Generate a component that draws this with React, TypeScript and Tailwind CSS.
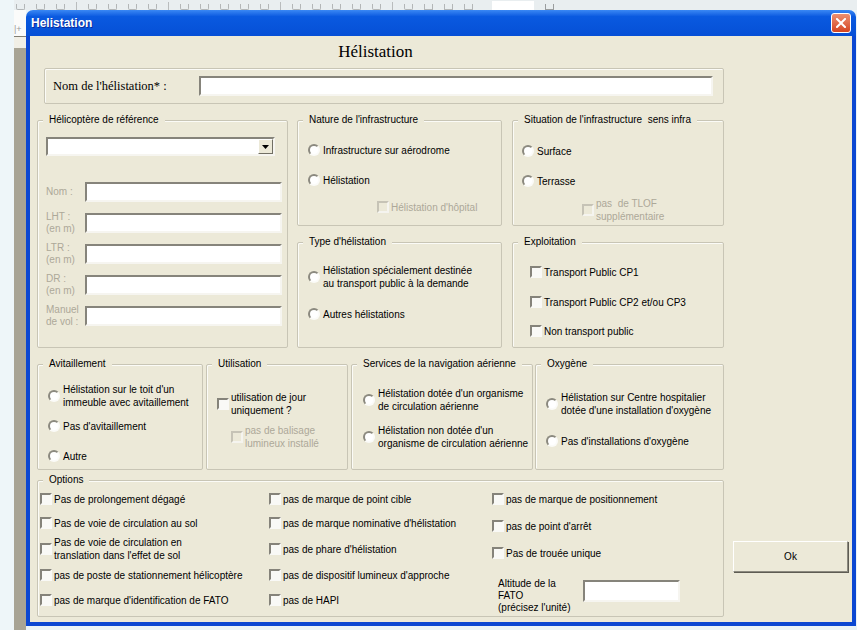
import type { ReactNode } from "react";

const toolbarIcons = [9, 9, 9, 0, 9, 9, 9, 9, 0, 9, 9, 9, 9, 9, 0, 9, 9, 9, 9, 9, 0, 9];

function Toolbar() {
  return (
    <div className="flex h-[10px] shrink-0 items-end gap-[11px] overflow-hidden bg-[#e9eef0] pl-[2px]">
      {toolbarIcons.map((w, i) =>
        w === 0 ? (
          <span key={i} className="h-[8px] w-px bg-[#b9bcbd]" />
        ) : (
          <span key={i} className="h-[6px] w-[9px] rounded-b-[2px] border border-t-0 border-[#b3b6b7]" />
        ),
      )}
      <span className="h-[6px] w-[9px] border border-t-0 border-[#b3b6b7]" />
      <span className="h-[6px] w-[9px] border border-t-0 border-[#b3b6b7]" />
      <span className="h-[6px] w-[9px] border border-t-0 border-[#b3b6b7]" />
      <span className="ml-[8px] h-[9px] w-[42px] bg-white" />
      <span className="h-[6px] w-[9px] border border-t-0 border-[#9a9d9e]" />
    </div>
  );
}

function Frame({
  title,
  className = "",
  children,
}: {
  title?: string;
  className?: string;
  children?: ReactNode;
}) {
  return (
    <div
      className={`relative shrink-0 rounded-[2px] border border-[#c8c5b5] shadow-[inset_1px_1px_0_#fbfbf7] ${className}`}
    >
      {title && (
        <span className="absolute -top-[7px] left-[5px] whitespace-pre bg-[#ece9d8] px-[6px] leading-[12px]">
          {title}
        </span>
      )}
      {children}
    </div>
  );
}

function Radio() {
  return (
    <span className="block size-[12px] shrink-0 rounded-full border-2 border-t-[#8b897f] border-l-[#8b897f] border-r-[#fbfbf8] border-b-[#fbfbf8] bg-white" />
  );
}

function Check({ disabled = false }: { disabled?: boolean }) {
  return disabled ? (
    <span className="block size-[12px] shrink-0 border-2 border-t-[#c6c3b6] border-l-[#c6c3b6] border-r-[#f5f4ef] border-b-[#f5f4ef] bg-[#ece9d8]" />
  ) : (
    <span className="block size-[12px] shrink-0 border-2 border-t-[#85837a] border-l-[#85837a] border-r-[#f9f9f6] border-b-[#f9f9f6] bg-[#f9f9f6]" />
  );
}

function Choice({
  type,
  disabled = false,
  className = "",
  children,
}: {
  type: "radio" | "check";
  disabled?: boolean;
  className?: string;
  children: ReactNode;
}) {
  return (
    <div
      className={`flex items-center ${type === "radio" ? "gap-[3px]" : "gap-[2px]"} ${className}`}
    >
      {type === "radio" ? <Radio /> : <Check disabled={disabled} />}
      <span className={disabled ? "text-[#aca899]" : undefined}>{children}</span>
    </div>
  );
}

function TextBox({ className = "" }: { className?: string }) {
  return (
    <div
      className={`shrink-0 border-2 border-t-[#86847b] border-l-[#86847b] border-r-[#f6f5f0] border-b-[#f6f5f0] bg-white ${className}`}
    />
  );
}

function ComboBox() {
  return (
    <div className="flex h-[19px] w-[229px] items-center justify-end border-2 border-t-[#86847b] border-l-[#86847b] border-r-[#f6f5f0] border-b-[#f6f5f0] bg-white">
      <div className="flex h-[15px] w-[15px] items-center justify-center border border-t-white border-l-white border-r-[#716f64] border-b-[#716f64] bg-[#ece9d8]">
        <svg width="7" height="4" viewBox="0 0 7 4" aria-hidden="true">
          <path d="M0 0h7L3.5 4z" fill="#000" />
        </svg>
      </div>
    </div>
  );
}

const helicoFields = [
  ["Nom :"],
  ["LHT :", "(en m)"],
  ["LTR :", "(en m)"],
  ["DR :", "(en m)"],
  ["Manuel", "de vol :"],
];

const optionsCol1 = [
  { h: "h-[24px]", label: "Pas de prolongement dégagé" },
  { h: "h-[24px]", label: "Pas de voie de circulation au sol" },
  { h: "h-[28px]", label: "Pas de voie de circulation en\ntranslation dans l'effet de sol" },
  { h: "h-[24px]", label: "pas de poste de stationnement hélicoptère" },
  { h: "h-[26px]", label: "pas de marque d'identification de FATO" },
];

const optionsCol2 = [
  { h: "h-[24px]", label: "pas de marque de point cible" },
  { h: "h-[24px]", label: "pas de marque nominative d'hélistation" },
  { h: "h-[28px]", label: "pas de phare d'hélistation" },
  { h: "h-[24px]", label: "pas de dispositif lumineux d'approche" },
  { h: "h-[26px]", label: "pas de HAPI" },
];

const optionsCol3 = [
  { h: "h-[24px]", label: "pas de marque de positionnement" },
  { h: "h-[30px]", label: "pas de point d'arrêt" },
  { h: "h-[24px]", label: "Pas de trouée unique" },
];

export default function App() {
  return (
    <div className="relative h-[630px] w-[857px] overflow-hidden bg-[#eaf3f7] font-['Liberation_Sans',Arial,sans-serif] text-[10px] leading-[13px] text-black">
      {/* spreadsheet window behind the form */}
      <div className="flex h-full">
        <div className="w-[14px] shrink-0 bg-[#eef6f9]" />
        <div className="flex flex-1 flex-col">
          <Toolbar />
          <div className="flex flex-1">
            <div className="flex w-[12px] shrink-0 flex-col">
              <div className="flex h-[26px] items-end bg-[#fbfbfa] pb-[2px] text-[9px] leading-[10px] text-[#9a9a9a]">
                |+
              </div>
              <div className="h-[12px] border-t border-[#807e73] bg-[#f1efe6]" />
              <div className="flex-1 bg-[#a8a495]" />
            </div>
            <div className="flex-1" />
          </div>
        </div>
      </div>

      {/* UserForm window */}
      <div className="absolute left-[26px] top-[10px] flex h-[616px] w-[830px] flex-col">
        <div className="flex h-[26px] shrink-0 items-center justify-between rounded-t-[7px] bg-linear-to-b from-[#3a88f4] via-[#0a5ae0] via-25% to-[#064fd6] pl-[5px] pr-[5px]">
          <span className="text-[12px] font-bold leading-[14px] text-white [text-shadow:1px_1px_0_#0b2a9a]">
            Helistation
          </span>
          <div className="flex size-[20px] items-center justify-center rounded-[3px] border border-white bg-linear-to-b from-[#ec8f70] to-[#d4431e]">
            <svg width="10" height="10" viewBox="0 0 10 10" aria-hidden="true">
              <path d="M1 1l8 8M9 1L1 9" stroke="#fff" strokeWidth="2" strokeLinecap="square" />
            </svg>
          </div>
        </div>

        <div className="flex flex-1 border-x-4 border-b-4 border-[#0b47d2] bg-[#ece9d8] pl-[7px] pt-[6px]">
          {/* main column */}
          <div className="flex w-[687px] shrink-0 flex-col">
            <div className="h-[20px] pr-[10px] text-center font-['Liberation_Serif','Times_New_Roman',serif] text-[17px] leading-[20px]">
              Hélistation
            </div>

            <Frame className="ml-[7px] mt-[6px] flex h-[36px] w-[680px] items-center pl-[8px]">
              <span className="w-[146px] shrink-0 font-['Liberation_Serif','Times_New_Roman',serif] text-[12.5px]">
                {"Nom de l'hélistation* :"}
              </span>
              <TextBox className="h-[20px] w-[514px]" />
            </Frame>

            {/* helicopter / infrastructure */}
            <div className="mt-[16px] flex h-[228px]">
              <Frame title="Hélicoptère de référence" className="h-[228px] w-[251px] pl-[8px] pt-[16px]">
                <ComboBox />
                <div className="mt-[26px] flex flex-col gap-[11px]">
                  {helicoFields.map((lines) => (
                    <div key={lines[0]} className="flex h-[20px] items-center">
                      <div className="w-[39px] shrink-0 leading-[12px] text-[#aca899]">
                        {lines.map((l) => (
                          <div key={l}>{l}</div>
                        ))}
                      </div>
                      <TextBox className="h-[20px] w-[197px]" />
                    </div>
                  ))}
                </div>
              </Frame>

              <div className="ml-[9px] flex w-[205px] shrink-0 flex-col">
                <Frame title="Nature de l'infrastructure" className="h-[106px] pl-[10px] pt-[21px]">
                  <Choice type="radio" className="h-[16px]">Infrastructure sur aérodrome</Choice>
                  <Choice type="radio" className="mt-[14px] h-[16px]">Hélistation</Choice>
                  <Choice type="check" disabled className="ml-[69px] mt-[11px] h-[16px]">
                    {"Hélistation d'hôpital"}
                  </Choice>
                </Frame>
                <Frame title="Type d'hélistation" className="mt-[16px] h-[106px] pl-[10px] pt-[21px]">
                  <Choice type="radio">
                    Hélistation spécialement destinée
                    <br />
                    au transport public à la demande
                  </Choice>
                  <Choice type="radio" className="mt-[16px] h-[16px]">Autres hélistations</Choice>
                </Frame>
              </div>

              <div className="ml-[10px] flex w-[212px] shrink-0 flex-col">
                <Frame
                  title="Situation de l'infrastructure  sens infra"
                  className="h-[106px] pl-[9px] pt-[22px]"
                >
                  <Choice type="radio" className="h-[16px]">Surface</Choice>
                  <Choice type="radio" className="mt-[14px] h-[16px]">Terrasse</Choice>
                  <Choice type="check" disabled className="ml-[60px] mt-[8px]">
                    <span className="whitespace-pre">{"pas  de TLOF\nsupplémentaire"}</span>
                  </Choice>
                </Frame>
                <Frame title="Exploitation" className="mt-[16px] h-[106px] pl-[17px] pt-[21px]">
                  <Choice type="check" className="h-[16px]">Transport Public CP1</Choice>
                  <Choice type="check" className="mt-[14px] h-[16px]">Transport Public CP2 et/ou CP3</Choice>
                  <Choice type="check" className="mt-[13px] h-[16px]">Non transport public</Choice>
                </Frame>
              </div>
            </div>

            {/* fuel, usage, air navigation, oxygen */}
            <div className="mt-[16px] flex h-[106px]">
              <Frame title="Avitaillement" className="h-[106px] w-[166px] pl-[10px] pt-[18px]">
                <Choice type="radio">
                  {"Hélistation sur le toit d'un"}
                  <br />
                  immeuble avec avitaillement
                </Choice>
                <Choice type="radio" className="mt-[9px] h-[16px]">{"Pas d'avitaillement"}</Choice>
                <Choice type="radio" className="mt-[14px] h-[16px]">Autre</Choice>
              </Frame>
              <Frame title="Utilisation" className="ml-[3px] h-[106px] w-[142px] pl-[10px] pt-[26px]">
                <Choice type="check">
                  utilisation de jour
                  <br />
                  uniquement ?
                </Choice>
                <Choice type="check" disabled className="ml-[14px] mt-[7px]">
                  pas de balisage
                  <br />
                  lumineux installé
                </Choice>
              </Frame>
              <Frame
                title="Services de la navigation aérienne"
                className="ml-[3px] h-[106px] w-[182px] pl-[11px] pt-[22px]"
              >
                <Choice type="radio">
                  {"Hélistation dotée d'un organisme"}
                  <br />
                  de circulation aérienne
                </Choice>
                <Choice type="radio" className="mt-[11px]">
                  {"Hélistation non dotée d'un"}
                  <br />
                  organisme de circulation aérienne
                </Choice>
              </Frame>
              <Frame title="Oxygène" className="ml-[2px] h-[106px] w-[189px] pl-[10px] pt-[26px]">
                <Choice type="radio">
                  Hélistation sur Centre hospitalier
                  <br />
                  {"dotée d'une installation d'oxygène"}
                </Choice>
                <Choice type="radio" className="mt-[16px] h-[16px]">
                  {"Pas d'installations d'oxygène"}
                </Choice>
              </Frame>
            </div>

            <Frame title="Options" className="mt-[10px] flex h-[137px] pl-[2px] pt-[6px]">
              <div className="flex w-[229px] shrink-0 flex-col">
                {optionsCol1.map((o) => (
                  <Choice key={o.label} type="check" className={o.h}>
                    <span className="whitespace-pre leading-[12px]">{o.label}</span>
                  </Choice>
                ))}
              </div>
              <div className="flex w-[223px] shrink-0 flex-col">
                {optionsCol2.map((o) => (
                  <Choice key={o.label} type="check" className={o.h}>
                    {o.label}
                  </Choice>
                ))}
              </div>
              <div className="flex flex-col">
                {optionsCol3.map((o) => (
                  <Choice key={o.label} type="check" className={o.h}>
                    {o.label}
                  </Choice>
                ))}
                <div className="ml-[6px] mt-[13px] flex items-start">
                  <div className="w-[85px] shrink-0 leading-[12px]">
                    Altitude de la
                    <br />
                    FATO
                    <br />
                    {"(précisez l'unité)"}
                  </div>
                  <TextBox className="mt-[2px] h-[22px] w-[97px]" />
                </div>
              </div>
            </Frame>
          </div>

          {/* right column */}
          <div className="ml-[9px] flex flex-col">
            <button
              type="button"
              className="mt-[499px] h-[31px] w-[115px] border border-t-white border-l-white border-r-[#8c8a7f] border-b-[#8c8a7f] bg-[#ece9d8] text-[10px] shadow-[1px_1px_0_#5e5c53]"
            >
              Ok
            </button>
          </div>
        </div>
      </div>
    </div>
  );
}
